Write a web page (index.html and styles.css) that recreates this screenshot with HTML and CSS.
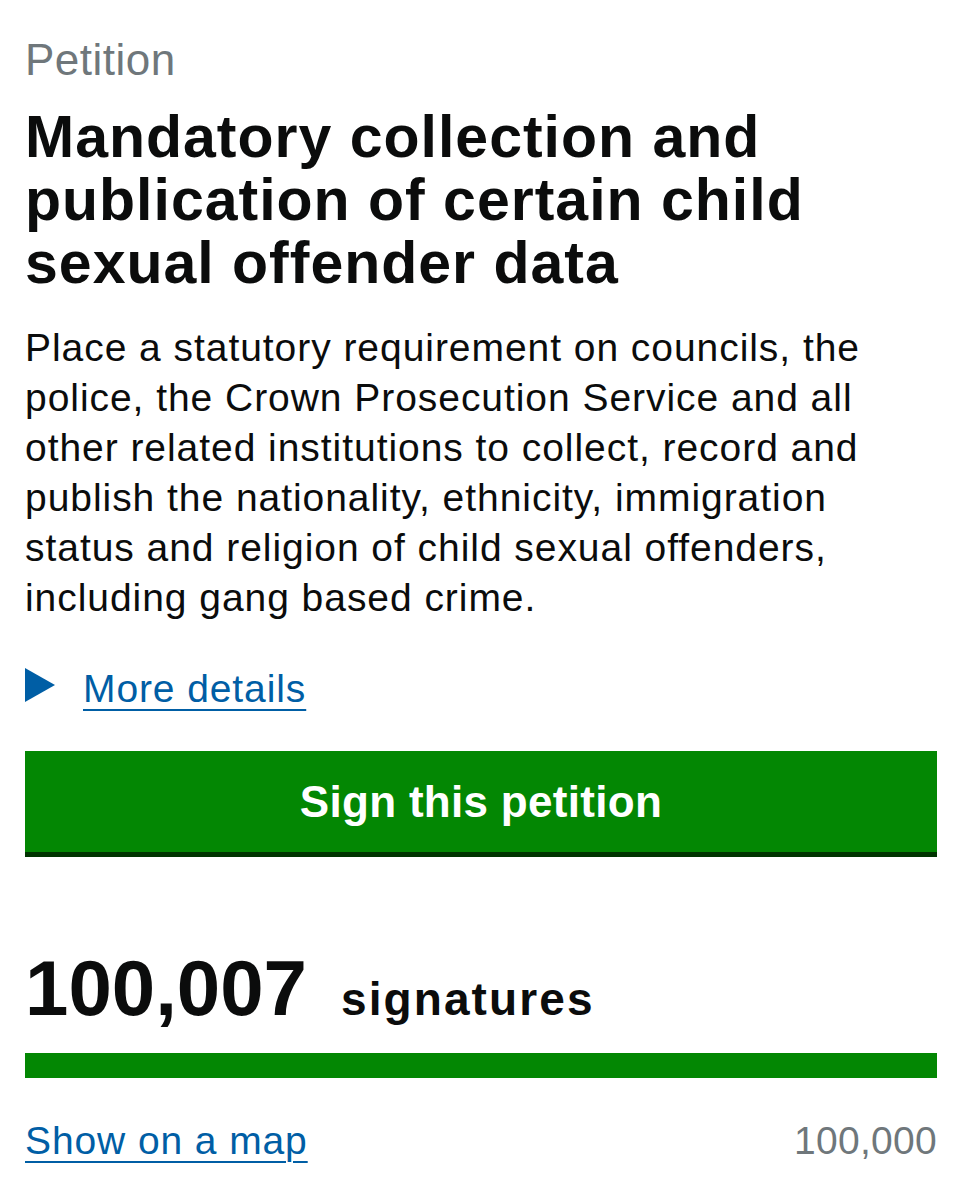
FILE: index.html
```html
<!DOCTYPE html>
<html lang="en">
<head>
<meta charset="utf-8">
<title>Petition</title>
<link rel="stylesheet" href="styles.css">
</head>
<body>
<main class="page">
  <p class="kicker">Petition</p>
  <h1 class="title">Mandatory collection and publication of certain child sexual offender data</h1>
  <p class="summary">Place a statutory requirement on councils, the police, the Crown Prosecution Service and all other related institutions to collect, record and publish the nationality, ethnicity, immigration status and religion of child sexual offenders, including gang based crime.</p>
  <div class="details">
    <span class="arrow"></span>
    <a class="link" href="#">More details</a>
  </div>
  <a class="button" href="#">Sign this petition</a>
  <div class="count">
    <span class="count-num">100,007</span>
    <span class="count-label">signatures</span>
  </div>
  <div class="progress"><div class="progress-fill" style="width:100%"></div></div>
  <div class="foot">
    <a class="link" href="#">Show on a map</a>
    <span class="target">100,000</span>
  </div>
</main>
</body>
</html>
```

FILE: styles.css
```css
* { box-sizing: border-box; }
html, body { margin: 0; padding: 0; background: #fff; }
body {
  font-family: "Liberation Sans", Arial, sans-serif;
  color: #0b0c0c;
}
.page {
  width: 912px;
  margin-left: 25px;
  padding-top: 35px;
}
.kicker {
  margin: 0;
  font-size: 44px;
  line-height: 50px;
  letter-spacing: 0.5px;
  color: #6f777b;
}
.title {
  margin: 21px 0 0;
  font-size: 59px;
  line-height: 63px;
  letter-spacing: 1px;
  font-weight: 700;
}
.summary {
  margin: 28px 0 0;
  font-size: 39px;
  line-height: 50px;
  letter-spacing: 0.95px;
}
.details {
  display: flex;
  align-items: flex-start;
  gap: 28px;
  margin-top: 43px;
}
.arrow {
  flex: none;
  margin-top: 2px;
  width: 0;
  height: 0;
  border-top: 17px solid transparent;
  border-bottom: 17px solid transparent;
  border-left: 30px solid #005ea5;
}
.link {
  font-size: 39px;
  line-height: 46px;
  letter-spacing: 0.9px;
  color: #005ea5;
  text-decoration: underline;
  text-decoration-thickness: 2px;
  text-underline-offset: 7px;
}
.button {
  display: block;
  margin-top: 39px;
  height: 106px;
  background: #038703;
  border-bottom: 5px solid #003300;
  color: #fff;
  font-size: 44px;
  font-weight: 700;
  line-height: 101px;
  letter-spacing: 0.3px;
  text-align: center;
  text-decoration: none;
}
.count {
  display: flex;
  align-items: baseline;
  gap: 34px;
  height: 80px;
  margin-top: 93px;
}
.count-num {
  font-size: 78px;
  line-height: 77px;
  font-weight: 700;
}
.count-label {
  font-size: 46px;
  font-weight: 700;
  letter-spacing: 2.1px;
}
.progress {
  margin-top: 23px;
  height: 25px;
  background: #dee0e2;
}
.progress-fill {
  height: 100%;
  background: #038703;
}
.foot {
  display: flex;
  justify-content: space-between;
  align-items: baseline;
  margin-top: 40px;
}
.target {
  font-size: 39px;
  letter-spacing: 0.3px;
  color: #6f777b;
}
```
